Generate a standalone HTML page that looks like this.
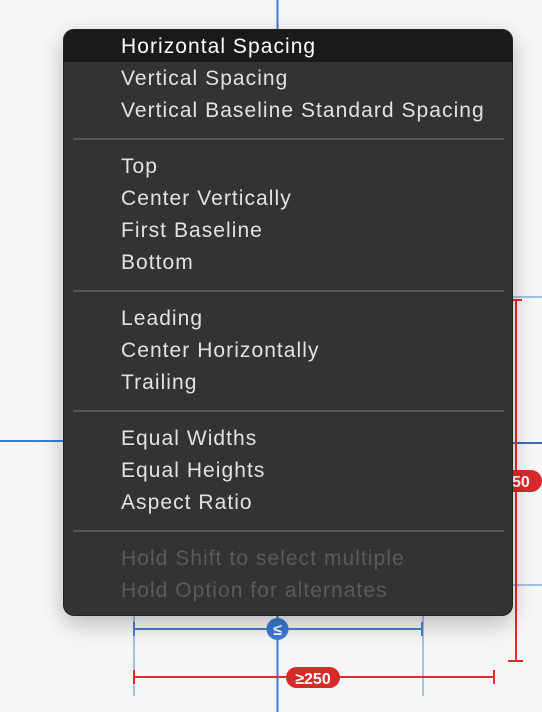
<!DOCTYPE html>
<html><head><meta charset="utf-8"><style>
html,body{margin:0;padding:0;}
body{width:542px;height:712px;position:relative;overflow:hidden;background:#f7f7f7;font-family:"Liberation Sans",sans-serif;}
.a{position:absolute;}
.menu{left:63px;top:29px;width:450px;height:587px;background:#333;border-radius:11px;overflow:hidden;box-shadow:0 8px 24px rgba(0,0,0,.25);border:1px solid #222;box-sizing:border-box;}
.hl{left:0;top:0;width:100%;height:32px;background:#1a1a1a;}
.it{left:57px;font-size:21px;color:#e2e2e2;letter-spacing:1.05px;line-height:32px;height:32px;white-space:nowrap;padding-top:1px;}
.sep{left:9px;width:431px;height:2px;background:#555;}
.dim{color:#5a5a5a;}
</style></head><body>
<svg class="a" style="left:0;top:0" width="542" height="712">
<line x1="277.5" y1="0" x2="277.5" y2="30" stroke="#3a7bd5" stroke-width="2"/>
<line x1="0" y1="441" x2="64" y2="441" stroke="#3a7bd5" stroke-width="2"/>
<line x1="513" y1="297" x2="542" y2="297" stroke="#8ab0e6" stroke-width="1.5"/>
<line x1="513" y1="443" x2="542" y2="443" stroke="#3a6fb8" stroke-width="2"/>
<line x1="513" y1="585" x2="542" y2="585" stroke="#8ab0e6" stroke-width="1.5"/>
<line x1="516" y1="300" x2="516" y2="661" stroke="#e8282b" stroke-width="2"/>
<line x1="509" y1="300" x2="522" y2="300" stroke="#e8282b" stroke-width="2"/>
<line x1="508" y1="661" x2="523" y2="661" stroke="#e8282b" stroke-width="2"/>
<rect x="500" y="470" width="42" height="22" rx="11" fill="#d92a2a"/>
<text x="512" y="487" fill="#fff" font-family="Liberation Sans" font-weight="bold" font-size="16">50</text>
<line x1="134" y1="600" x2="134" y2="696" stroke="#8ab0e6" stroke-width="1.5"/>
<line x1="423" y1="600" x2="423" y2="696" stroke="#8ab0e6" stroke-width="1.5"/>
<line x1="134" y1="629" x2="423" y2="629" stroke="#4a7fc4" stroke-width="2"/>
<line x1="134" y1="622" x2="134" y2="636" stroke="#4a7fc4" stroke-width="2"/>
<line x1="422" y1="622" x2="422" y2="636" stroke="#4a7fc4" stroke-width="2"/>
<line x1="277.5" y1="616" x2="277.5" y2="712" stroke="#3a7bd5" stroke-width="2"/>
<circle cx="277.5" cy="629" r="11" fill="#3a7bd5"/>
<text x="277.5" y="635" fill="#fff" font-family="Liberation Sans" font-weight="bold" font-size="16" text-anchor="middle">≤</text>
<line x1="134" y1="677" x2="494" y2="677" stroke="#e8282b" stroke-width="2"/>
<line x1="134" y1="670" x2="134" y2="684" stroke="#e8282b" stroke-width="2"/>
<line x1="494" y1="670" x2="494" y2="684" stroke="#e8282b" stroke-width="2"/>
<rect x="286" y="667" width="54" height="21" rx="10.5" fill="#d92a2a"/>
<text x="313" y="684" fill="#fff" font-family="Liberation Sans" font-weight="bold" font-size="16" text-anchor="middle">≥250</text>
</svg>
<div class="a menu">
<div class="a hl"></div>
<div class="a it" style="top:0;color:#fff">Horizontal Spacing</div>
<div class="a it" style="top:32px">Vertical Spacing</div>
<div class="a it" style="top:64px">Vertical Baseline Standard Spacing</div>
<div class="a sep" style="top:108px"></div>
<div class="a it" style="top:120px">Top</div>
<div class="a it" style="top:152px">Center Vertically</div>
<div class="a it" style="top:184px">First Baseline</div>
<div class="a it" style="top:216px">Bottom</div>
<div class="a sep" style="top:260px"></div>
<div class="a it" style="top:272px">Leading</div>
<div class="a it" style="top:304px">Center Horizontally</div>
<div class="a it" style="top:336px">Trailing</div>
<div class="a sep" style="top:380px"></div>
<div class="a it" style="top:392px">Equal Widths</div>
<div class="a it" style="top:424px">Equal Heights</div>
<div class="a it" style="top:456px">Aspect Ratio</div>
<div class="a sep" style="top:500px"></div>
<div class="a it dim" style="top:512px">Hold Shift to select multiple</div>
<div class="a it dim" style="top:544px">Hold Option for alternates</div>
</div>
</body></html>
